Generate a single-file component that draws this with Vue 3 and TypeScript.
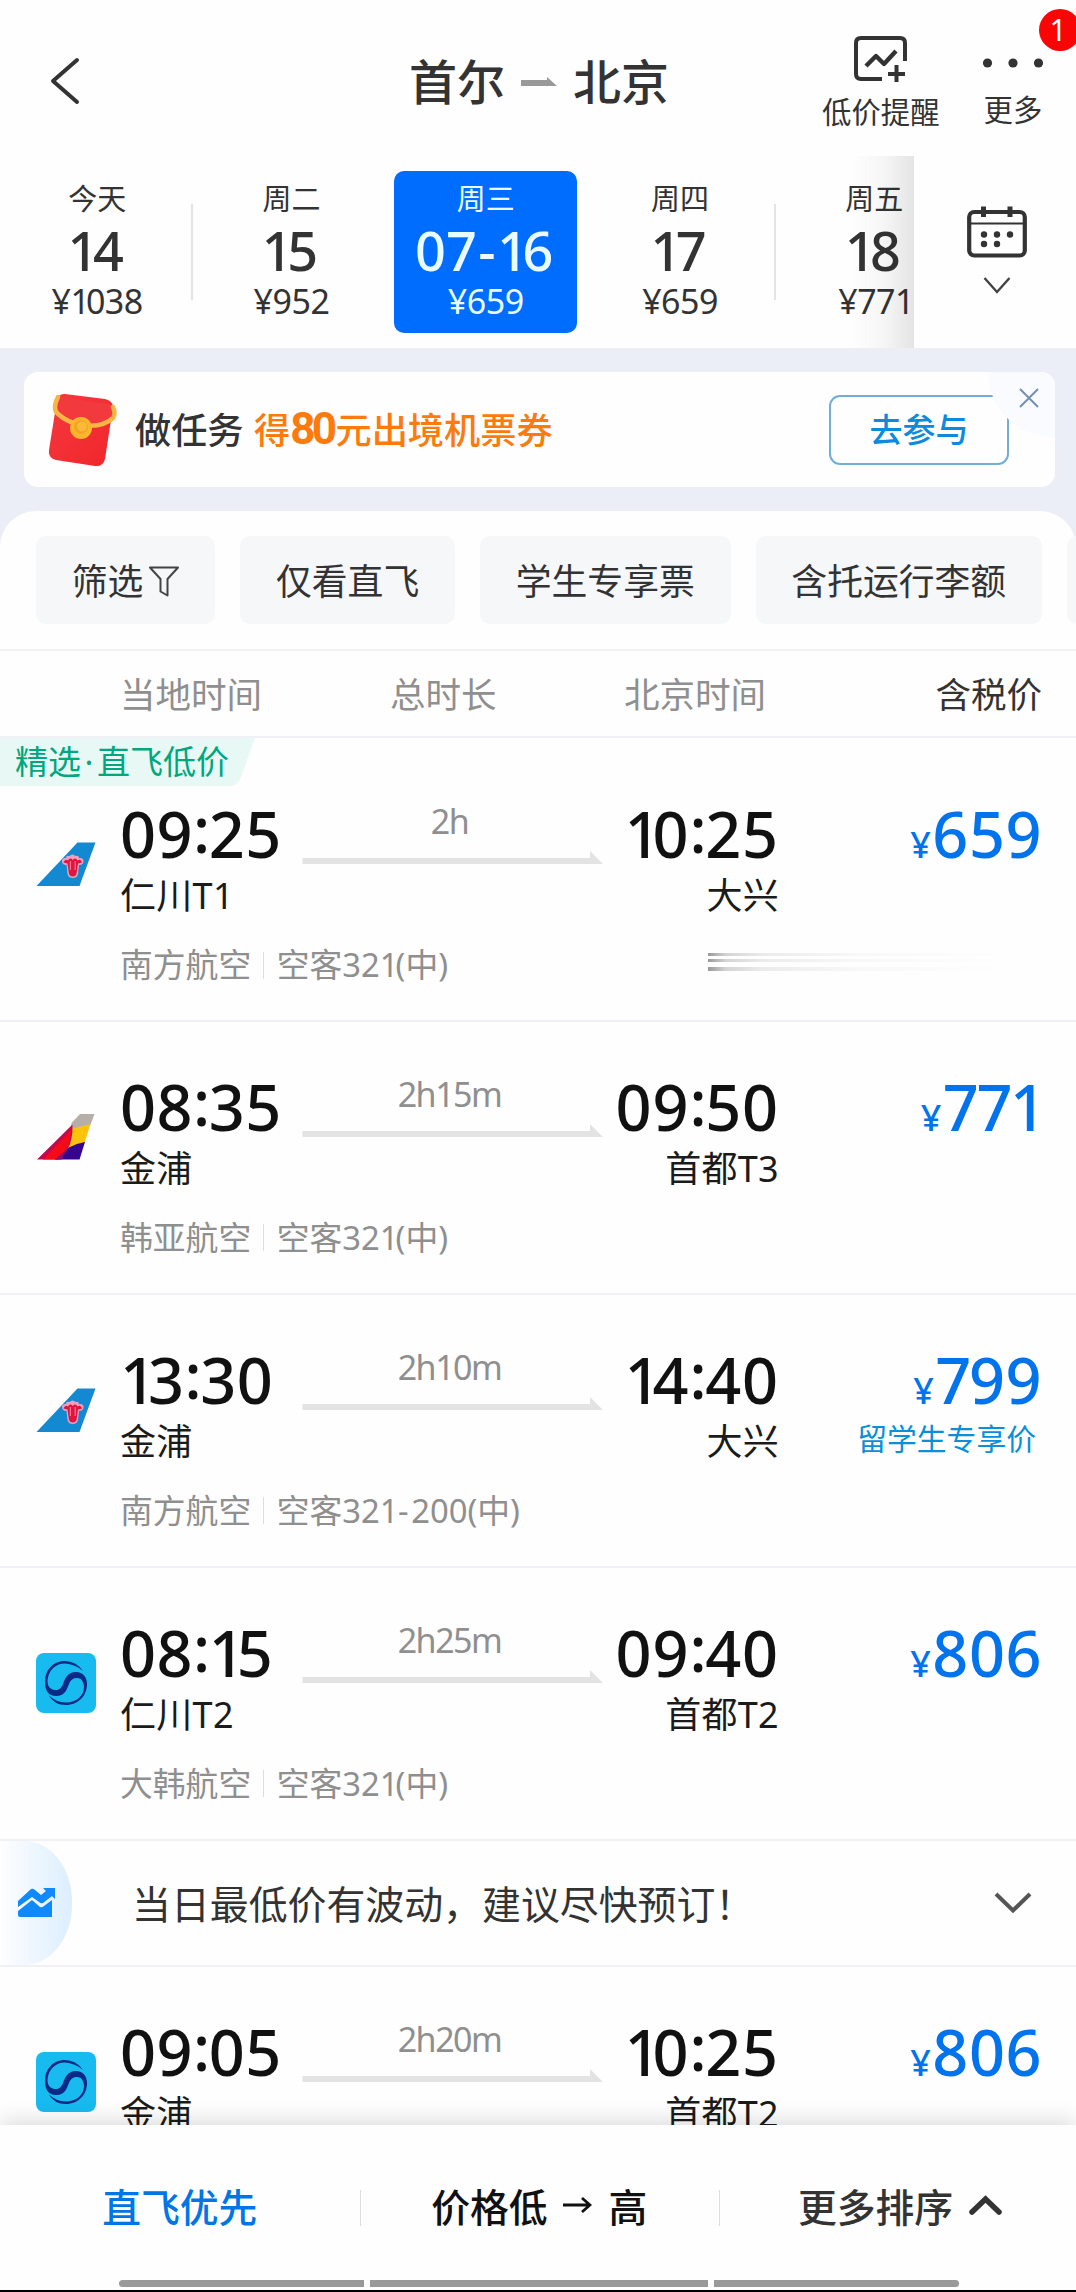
<script setup lang="ts">
interface DayTab {
  week: string
  day: string
  price: string
  active?: boolean
  divider?: boolean
}

interface Flight {
  carrier: 'cz' | 'oz' | 'ke'
  dep: string
  depPort: string
  arr: string
  arrPort: string
  duration: string
  airline?: string
  plane?: string
  price: string
  note?: string
  hint?: boolean
}

const days: DayTab[] = [
  { week: '今天', day: '14', price: '¥1038', divider: true },
  { week: '周二', day: '15', price: '¥952' },
  { week: '周三', day: '07-16', price: '¥659', active: true },
  { week: '周四', day: '17', price: '¥659', divider: true },
  { week: '周五', day: '18', price: '¥771' },
]

const chips = ['仅看直飞', '学生专享票', '含托运行李额']

const flights: Flight[] = [
  { carrier: 'cz', dep: '09:25', depPort: '仁川T1', arr: '10:25', arrPort: '大兴', duration: '2h', airline: '南方航空', plane: '空客321(中)', price: '659', hint: true },
  { carrier: 'oz', dep: '08:35', depPort: '金浦', arr: '09:50', arrPort: '首都T3', duration: '2h15m', airline: '韩亚航空', plane: '空客321(中)', price: '771' },
  { carrier: 'cz', dep: '13:30', depPort: '金浦', arr: '14:40', arrPort: '大兴', duration: '2h10m', airline: '南方航空', plane: '空客321-200(中)', price: '799', note: '留学生专享价' },
  { carrier: 'ke', dep: '08:15', depPort: '仁川T2', arr: '09:40', arrPort: '首都T2', duration: '2h25m', airline: '大韩航空', plane: '空客321(中)', price: '806' },
]

const lateFlights: Flight[] = [
  { carrier: 'ke', dep: '09:05', depPort: '金浦', arr: '10:25', arrPort: '首都T2', duration: '2h20m', price: '806' },
]

const sections = [
  { key: 'early', items: flights },
  { key: 'late', items: lateFlights },
]

// Proportional figures: the narrow "1" and "7", the raised colon and the wide hyphen get their own class.
function glyphClass(ch: string): string {
  if (ch === '1') return 'g1'
  if (ch === '7') return 'g7'
  if (ch === ':') return 'gc'
  if (ch === '-') return 'gh'
  return 'g'
}
</script>

<template>
  <div class="screen">
    <header class="top">
      <svg class="back" width="32" height="50" viewBox="0 0 32 50"><path d="M28 4 L4 25 L28 46" fill="none" stroke="#333" stroke-width="4" stroke-linecap="round" stroke-linejoin="round" /></svg>
      <div class="title">
        <span>首尔</span>
        <svg width="36" height="10" viewBox="0 0 36 10"><path d="M0 3 H26 V0 L36 9 H0 Z" fill="#999" /></svg>
        <span>北京</span>
      </div>
      <div class="action alert-act">
        <svg width="54" height="46" viewBox="0 0 54 46" fill="none" stroke="#333" stroke-width="4">
          <path d="M28 43 H7 Q2 43 2 38 V7 Q2 2 7 2 H46 Q51 2 51 7 V25" />
          <path d="M12 30 L22 20 L30 28 L42 15" stroke-linejoin="round" stroke-width="4.4" />
          <path d="M34 38 H51 M42.500 29 V46" />
        </svg>
        <span>低价提醒</span>
      </div>
      <div class="action more-act">
        <svg width="62" height="12" viewBox="0 0 62 12" fill="#333"><circle cx="5.500" cy="6" r="4.600" /><circle cx="31" cy="6" r="4.600" /><circle cx="56.500" cy="6" r="4.600" /></svg>
        <span>更多</span>
      </div>
      <span class="badge">1</span>
    </header>

    <nav class="dates">
      <div class="days">
        <div v-for="d in days" :key="d.day" class="day" :class="{ active: d.active, divider: d.divider }">
          <div class="day-box">
            <span class="week">{{ d.week }}</span>
            <span class="num"><span v-for="(c, i) in d.day" :key="i" :class="glyphClass(c)">{{ c }}</span></span>
            <span class="fare"><span v-for="(c, i) in d.price" :key="i" :class="glyphClass(c)">{{ c }}</span></span>
          </div>
        </div>
        <i class="fade"></i>
      </div>
      <div class="cal">
        <svg width="60" height="52" viewBox="0 0 60 52">
          <rect x="2.200" y="6" width="55.600" height="43.500" rx="5" fill="none" stroke="#333" stroke-width="4.200" />
          <path d="M3 17.500 H57" stroke="#333" stroke-width="2.200" />
          <path d="M16.500 0.500 V11 M43 0.500 V11" stroke="#333" stroke-width="5" />
          <g fill="#333"><circle cx="17" cy="28.500" r="3.200" /><circle cx="30" cy="28.500" r="3.200" /><circle cx="43" cy="28.500" r="3.200" /><circle cx="17" cy="38" r="3.200" /><circle cx="30" cy="38" r="3.200" /></g>
        </svg>
        <svg class="cal-down" width="28" height="17" viewBox="0 0 28 17"><path d="M1.500 1 L14 15 L26.500 1" fill="none" stroke="#444" stroke-width="2.400" /></svg>
      </div>
    </nav>

    <section class="promo-zone">
      <div class="promo">
        <svg class="packet" width="70" height="74" viewBox="0 0 70 74">
          <defs>
            <linearGradient id="red" x1="0" y1="0" x2="1" y2="1"><stop offset="0" stop-color="#f5393d" /><stop offset="1" stop-color="#f0262c" /></linearGradient>
          </defs>
          <path d="M17 1 L57 6 Q65 8 65 14 L57 66 Q55 74 47 73 L8 67 Q0 65 1 57 L9 7 Q11 0 17 1 Z" fill="url(#red)" />
          <path d="M12 4 L9 20 Q18 31 35 33 Q56 35 66 22 L66 12" fill="#f23a3e" />
          <path d="M10 4 Q4 16 10 21 Q20 30 34 32 Q54 35 65 25 Q68 21 65 14" fill="none" stroke="#f9b544" stroke-width="4.500" stroke-linecap="round" />
          <circle cx="33" cy="35" r="11" fill="#fbb62f" /><circle cx="33" cy="34" r="7" fill="#f4a423" /><circle cx="34" cy="33.500" r="5" fill="#fbb93a" />
        </svg>
        <p class="promo-text">做任务 <span class="orange">得<b>80</b>元出境机票券</span></p>
        <button class="join">去参与</button>
        <span class="close"><svg width="20" height="20" viewBox="0 0 20 20"><path d="M1 1 L19 19 M19 1 L1 19" stroke="#7390b4" stroke-width="2" /></svg></span>
      </div>
    </section>

    <main class="sheet">
      <div class="chips">
        <span class="chip">筛选<svg width="30" height="31" viewBox="0 0 30 31"><path d="M1 1.500 H29 L18.500 13 V29.500 L11.500 25.500 V13 Z" fill="none" stroke="#444" stroke-width="2" stroke-linejoin="round" /></svg></span>
        <span v-for="c in chips" :key="c" class="chip">{{ c }}</span>
        <span class="chip stub"></span>
      </div>
      <div class="cols">
        <span class="c1">当地时间</span><span class="c2">总时长</span><span class="c3">北京时间</span><span class="c4">含税价</span>
      </div>
      <div class="pick">
        <svg width="255" height="48" viewBox="0 0 255 48"><path d="M0 0 H255 L241 39 Q238 48 229 48 H0 Z" fill="#e8f8f5" /></svg>
        <span>精选<i>·</i>直飞低价</span>
      </div>

      <template v-for="s in sections" :key="s.key">
        <div v-if="s.key === 'late'" class="notice">
          <div class="notice-mark">
            <svg width="38" height="30" viewBox="0 0 38 30" fill="#1089fb">
              <path d="M0 13 L13 1 Q15 0 17 2 L23 7 L28 3 L25 0 H37 V11 L34 8 L25 15 Q23 16 21 14 L14 9 L0 19 Z" />
              <path d="M0 23 L14 12 L22 19 Q24 20 26 18 L34 12 V29 H2 Q0 29 0 27 Z" />
            </svg>
          </div>
          <span>当日最低价有波动，建议尽快预订！</span>
          <svg class="notice-down" width="38" height="22" viewBox="0 0 38 22"><path d="M2 2 L19 18.500 L36 2" fill="none" stroke="#555" stroke-width="4" /></svg>
        </div>

        <article v-for="f in s.items" :key="f.dep" class="flight">
          <div class="logo">
            <svg v-if="f.carrier === 'cz'" width="60" height="60" viewBox="0 0 60 60">
              <path d="M41.500 8.500 H59.500 L43.500 52 H0.500 Z" fill="#1389d2" />
              <path d="M26 27 Q26 23.500 30 24 Q30 21 33.500 22 Q36.500 19 39.500 22 Q43 21 43 24 Q47.500 23.500 47.500 27 Q47.500 31 43 31 L42 40 Q41 44 36.800 44 Q32.500 44 31.500 40 L30.500 31 Q26 31 26 27 Z" fill="#e9a3c0" />
              <path d="M27.500 28.500 Q29 24.500 32 26.500 Q34 23 36.800 26 Q39.500 23 41.500 26.500 Q45 24.500 46 28.500 L42 29.500 L40.500 40 Q39.500 42.500 36.800 42.500 Q34 42.500 33 40 L31.500 29.500 Z" fill="#e0143c" />
              <path d="M34.300 27 V36 M39.200 27 V36" stroke="#f0a0b8" stroke-width="0.900" />
            </svg>
            <svg v-else-if="f.carrier === 'oz'" width="60" height="60" viewBox="0 0 60 60">
              <path d="M44 7 H58.500 L54 19 Q43 20 34 27 L35.500 16 Z" fill="#b6afa8" />
              <path d="M54.500 17 L48.500 36 Q38 38 28 46 L35 22 Q43 20 54.500 17 Z" fill="#fcc30b" />
              <path d="M49 35 L43.500 52.500 H19 Q30 38 49 35 Z" fill="#36058f" />
              <path d="M36.500 17.500 Q37 34 31 43 Q27 48 24 52.500 H1 Z" fill="#c00a50" />
              <path d="M35 21 Q35 34 30 43 L21 52.500 H7 L33 25 Z" fill="#f50a18" />
              <path d="M31 42 Q28 46 26 52.500 H19 Z" fill="#8a1170" />
            </svg>
            <svg v-else width="60" height="60" viewBox="0 0 60 60">
              <rect width="60" height="60" rx="8" fill="#17bbf0" />
              <path d="M47 18 Q40 8 29 8 C16 8 9 18 9 29 C9 38 13 43 20 43 C30 43 31 35 33 31 C35 26 38 25 41 25 C46 25 48 30 48 34 C48 43 40 49.500 30 49.500 Q20 49.500 12.500 42 Q18 52 30 52 C42 52 51 43 51 31 C51 23 46 19 40 19 C31 19 29 26 27 31 C25 36 22 37.500 19 37 C14 36.500 11.500 33 11.500 28 C12 18 19 10.500 29 10.500 Q39 11 47 18 Z" fill="#0a2a86" />
            </svg>
          </div>
          <div class="body">
            <div class="legs">
              <div class="end">
                <div class="time"><span v-for="(c, i) in f.dep" :key="i" :class="glyphClass(c)">{{ c }}</span></div>
                <div class="port">{{ f.depPort }}</div>
              </div>
              <div class="span">
                <div class="dur">{{ f.duration }}</div>
                <svg width="301" height="13" viewBox="0 0 301 13"><path d="M0.500 7 H288 V0 L301 13 H0.500 Z" fill="#e3e3e3" /></svg>
              </div>
              <div class="end right">
                <div class="time"><span v-for="(c, i) in f.arr" :key="i" :class="glyphClass(c)">{{ c }}</span></div>
                <div class="port">{{ f.arrPort }}</div>
              </div>
            </div>
            <div v-if="f.airline" class="meta"><span>{{ f.airline }}</span><i></i><span><span v-for="(c, i) in f.plane" :key="i" :class="glyphClass(c)">{{ c }}</span></span></div>
          </div>
          <div class="cost">
            <div class="amount"><small>¥</small><span v-for="(c, i) in f.price" :key="i" :class="glyphClass(c)">{{ c }}</span></div>
            <div v-if="f.note" class="note">{{ f.note }}</div>
          </div>
          <div v-if="f.hint" class="streaks"><i></i><i></i><i></i></div>
        </article>
      </template>
    </main>

    <footer class="sortbar">
      <div class="sorts">
        <span class="on">直飞优先</span>
        <span class="dark">价格低<svg width="29" height="18" viewBox="0 0 29 18"><path d="M0 9 H27 M19 2 L27 9 L19 16" fill="none" stroke="#111" stroke-width="2.800" /></svg>高</span>
        <span class="rest">更多排序<svg class="up" width="33" height="20" viewBox="0 0 33 20"><path d="M3 17 L16.500 4 L30 17" fill="none" stroke="#333" stroke-width="5.500" stroke-linecap="round" /></svg></span>
      </div>
      <div class="grip"><i></i><i></i><i></i></div>
    </footer>
  </div>
</template>

<style>
body {
  margin: 0;
  background: #fff;
}
</style>

<style scoped>
.screen {
  position: relative;
  width: 1076px;
  height: 2292px;
  overflow: hidden;
  background: #fefefe;
  color: #333;
  font-family: 'Noto Sans', 'Noto Sans CJK SC', sans-serif;
  box-sizing: border-box;
}
svg {
  display: block;
  flex: none;
}
i {
  font-style: normal;
}
.top {
  position: relative;
  height: 156px;
}
.back {
  position: absolute;
  left: 49px;
  top: 56px;
}
.title {
  display: flex;
  align-items: center;
  justify-content: center;
  gap: 16px;
  height: 60px;
  padding-top: 52px;
  padding-left: 2px;
  font-size: 48px;
  font-weight: 500;
  line-height: 60px;
}
.action {
  position: absolute;
  display: flex;
  flex-direction: column;
  align-items: center;
  font-size: 29.4px;
  line-height: 36px;
  white-space: nowrap;
}
.alert-act {
  left: 822px;
  top: 36px;
  gap: 12px;
}
.more-act {
  left: 982px;
  top: 57px;
  gap: 23px;
}
.badge {
  position: absolute;
  left: 1039px;
  top: 9px;
  width: 38px;
  height: 42px;
  padding-right: 4px;
  border-radius: 21px;
  background: #f90505;
  color: #fff;
  font-size: 30px;
  line-height: 41px;
  text-align: center;
}
.dates {
  display: flex;
  height: 192px;
}
.days {
  position: relative;
  display: flex;
  flex: none;
  width: 914px;
  overflow: hidden;
}
.day {
  position: relative;
  flex: none;
  width: 194.300px;
  padding-top: 15px;
}
.day.divider::after {
  content: '';
  position: absolute;
  right: 1px;
  top: 48px;
  width: 2px;
  height: 96px;
  background: #e4e4e4;
}
.day-box {
  display: flex;
  flex-direction: column;
  align-items: center;
  width: 183px;
  height: 162px;
  margin: 0 auto;
  border-radius: 10px;
}
.active .day-box {
  background: #006dff;
  color: #e9fbff;
}
.week {
  height: 34px;
  margin-top: 11px;
  font-size: 29px;
  line-height: 34px;
}
.num {
  height: 60px;
  margin-top: 4px;
  margin-left: -3px;
  font-size: 54px;
  font-weight: 500;
  line-height: 60px;
}
.num .g1 {
  letter-spacing: -5.500px;
}
.num .gh {
  padding: 0 1.500px;
}
.fare {
  height: 40px;
  margin-top: 1px;
  font-size: 34px;
  line-height: 40px;
  letter-spacing: -0.5px;
}
.fare .g1 {
  letter-spacing: -4px;
}
.fade {
  position: absolute;
  right: 0;
  top: 0;
  width: 62px;
  height: 192px;
  background: linear-gradient(90deg, rgba(0, 0, 0, 0), rgba(0, 0, 0, 0.03) 50%, rgba(0, 0, 0, 0.1));
}
.cal {
  display: flex;
  flex-direction: column;
  align-items: center;
  flex: 1;
  padding: 50px 0 0 4px;
}
.cal-down {
  margin-top: 19px;
}
.promo-zone {
  height: 199px;
  margin-bottom: -36px;
  background: #ebeef7;
}
.promo {
  position: relative;
  display: flex;
  align-items: center;
  height: 115px;
  margin: 0 21px 0 24px;
  transform: translateY(24px);
  border-radius: 14px;
  background: #fefefe;
  overflow: hidden;
}
.packet {
  margin-left: 24px;
}
.promo-text {
  margin: 0 0 0 17px;
  font-size: 36.200px;
  font-weight: 500;
  line-height: 50px;
  white-space: nowrap;
}
.orange {
  margin-left: 1px;
  color: #fd7a0c;
}
.orange b {
  font-family: Roboto, sans-serif;
  font-stretch: 88%;
  font-size: 44px;
  line-height: 30px;
  letter-spacing: -3.600px;
  margin: 0 2px 0 0;
}
.join {
  width: 180px;
  height: 70px;
  margin-left: auto;
  margin-right: 46px;
  padding: 0;
  border: 2px solid #72aed6;
  border-radius: 11px;
  background: none;
  color: #0b8ade;
  font: 500 33px/64px 'Noto Sans', 'Noto Sans CJK SC', sans-serif;
}
.close {
  position: absolute;
  right: 0;
  top: 0;
  display: flex;
  width: 67px;
  height: 65px;
  box-sizing: border-box;
  padding: 16px 0 0 31px;
  border-bottom-left-radius: 66px;
  background: #fafbfe;
}
.sheet {
  position: relative;
  border-radius: 36px 36px 0 0;
  background: #fefefe;
}
.chips {
  display: flex;
  gap: 25px;
  height: 88px;
  padding: 25px 0 25px 36px;
  border-bottom: 2px solid #f0f1f5;
  overflow: hidden;
}
.chip {
  display: flex;
  align-items: center;
  flex: none;
  box-sizing: border-box;
  height: 88px;
  padding: 2px 35.800px 0;
  border-radius: 10px;
  background: #f6f7f9;
  font-size: 35.800px;
  line-height: 50px;
}
.chip svg {
  margin-left: 6px;
}
.stub {
  width: 100px;
}
.cols {
  display: flex;
  height: 85px;
  border-bottom: 2px solid #f0f1f5;
  color: #8f8f8f;
  font-size: 35.500px;
  line-height: 87px;
}
.c1 {
  width: 270px;
  padding-left: 120px;
}
.c2 {
  width: 234px;
}
.c3 {
  flex: 1;
}
.c4 {
  padding-right: 34px;
  color: #333;
}
.pick {
  display: grid;
  height: 48px;
  margin-bottom: -37px;
  color: #00a77d;
  font-size: 33px;
  line-height: 48px;
}
.pick > * {
  grid-area: 1 / 1;
}
.pick span {
  padding-left: 15px;
}
.pick i {
  display: inline-block;
  width: 16px;
  text-align: center;
}
.flight {
  position: relative;
  display: flex;
  box-sizing: border-box;
  height: 272.900px;
  border-bottom: 2px solid #f0f1f5;
}
.logo {
  width: 60px;
  padding: 85px 24px 0 36px;
}
.body {
  width: 659px;
}
.legs {
  display: flex;
  height: 177px;
}
.end {
  width: 182px;
  padding-top: 53px;
  white-space: nowrap;
}
.end.right {
  width: 176px;
  display: flex;
  flex-direction: column;
  align-items: flex-end;
}
.time {
  height: 64px;
  color: #111;
  font-size: 63px;
  font-weight: 500;
  line-height: 64px;
  letter-spacing: 0.5px;
}
.time .gc {
  line-height: 0;
  letter-spacing: -1.500px;
  vertical-align: 5px;
}
.time .g1 {
  letter-spacing: -8px;
}
.right .time {
  letter-spacing: 0.900px;
}
.port {
  color: #1b1b1b;
  font-size: 36px;
  line-height: 60px;
  letter-spacing: 0.3px;
}
.span {
  width: 301px;
  padding-top: 52px;
}
.dur {
  height: 50px;
  color: #8f8f8f;
  font-size: 34px;
  line-height: 40px;
  letter-spacing: -1.500px;
  text-align: center;
  text-indent: -6px;
}
.meta {
  display: flex;
  align-items: center;
  margin-top: 14px;
  height: 50px;
  color: #8f8f8f;
  font-size: 32.800px;
  line-height: 50px;
}
.meta i {
  width: 1px;
  height: 27px;
  margin: 0 12.500px 0 12px;
  background: #ddd;
}
.meta .g1 {
  letter-spacing: -3px;
}
.meta .gh {
  padding: 0 2.500px;
}
.cost {
  display: flex;
  flex-direction: column;
  align-items: flex-end;
  flex: 1;
  padding: 53px 34px 0 0;
}
.amount {
  height: 64px;
  color: #0173ec;
  font-size: 63px;
  font-weight: 500;
  line-height: 64px;
  letter-spacing: 0.5px;
}
.amount small {
  margin-right: 1px;
  font-size: 36px;
}
.amount .g1 {
  letter-spacing: -4px;
}
.amount .g7 {
  letter-spacing: -2.500px;
}
.note {
  margin-right: 6px;
  color: #0b8fd8;
  font-size: 29.800px;
  line-height: 54px;
}
.streaks {
  position: absolute;
  left: 708px;
  top: 204px;
  width: 300px;
}
.streaks i {
  display: block;
  height: 3px;
  margin-bottom: 3px;
  background: linear-gradient(90deg, #999, #d4d4d4 6%, #ebebeb 18%, #f8f8f8 50%, #fefefe);
}
.streaks i:last-child {
  height: 4px;
  margin-top: 5px;
}
.notice {
  display: flex;
  align-items: center;
  box-sizing: border-box;
  height: 126.500px;
  border-bottom: 2px solid #f0f1f5;
  font-size: 38.900px;
}
.notice-mark {
  display: flex;
  align-items: center;
  box-sizing: border-box;
  width: 72px;
  height: 124px;
  margin-right: 60px;
  padding-left: 18px;
  border-radius: 0 48px 48px 0 / 0 60px 60px 0;
  background: linear-gradient(90deg, #fefefe, #dceefe);
}
.notice > span {
  padding-bottom: 2px;
  font-weight: 400;
  white-space: nowrap;
}
.notice-down {
  margin-left: auto;
  margin-right: 44px;
}
.sortbar {
  position: absolute;
  left: 0;
  right: 0;
  bottom: 0;
  height: 165px;
  border-bottom: 2px solid #000;
  background: #fefefe;
  box-shadow: 0 -2px 22px rgba(0, 0, 0, 0.16);
}
.sorts {
  display: flex;
  height: 155px;
  font-size: 38.800px;
  font-weight: 500;
}
.sorts span {
  position: relative;
  display: flex;
  align-items: center;
  justify-content: center;
  flex: none;
  box-sizing: border-box;
  width: 359.500px;
  padding-top: 5px;
}
.sorts .rest {
  width: 357px;
  padding-left: 5px;
}
.sorts span + span::before {
  content: '';
  position: absolute;
  left: 0;
  top: 65px;
  width: 1px;
  height: 36px;
  background: #ddd;
}
.sorts .on {
  color: #0076e6;
}
.sorts .dark {
  color: #111;
}
.dark svg {
  margin: 0 17px 0 15px;
}
.sorts .up {
  margin-left: 16px;
}
.grip {
  display: flex;
  gap: 6px;
  margin-left: 119px;
}
.grip i {
  width: 245px;
  height: 7px;
  background: #999;
}
.grip i:first-child {
  border-radius: 4px 0 0 4px;
}
.grip i:nth-child(2) {
  width: 338px;
}
.grip i:last-child {
  border-radius: 0 4px 4px 0;
}
</style>
